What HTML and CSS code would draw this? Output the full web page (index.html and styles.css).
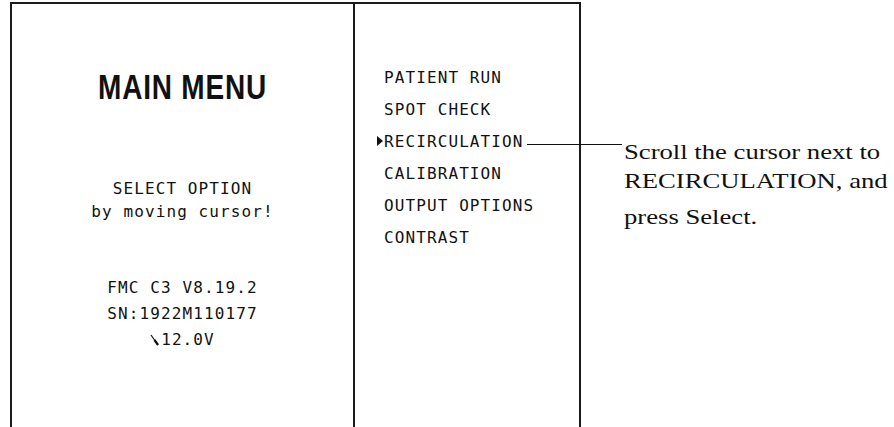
FILE: index.html
```html
<!DOCTYPE html>
<html lang="en">
<head>
  <meta charset="UTF-8">
  <meta name="viewport" content="width=device-width, initial-scale=1.0">
  <title>Main Menu</title>
  <link rel="stylesheet" href="styles.css">
</head>
<body>

  <div class="page">
    <div class="screen">
      <div class="panel-left">
        <h1 class="title">MAIN MENU</h1>
        <p class="lcd prompt">SELECT OPTION</p>
        <p class="lcd">by moving cursor!</p>
        <p class="lcd info first">FMC C3 V8.19.2</p>
        <p class="lcd info">SN:1922M110177</p>
        <p class="lcd info">
          <svg class="plug" width="10" height="12" viewBox="0 0 10 12">
            <path d="M1 1 L8 11" stroke="#111" stroke-width="1.2" fill="none"/>
            <path d="M4.5 6 L8 11" stroke="#111" stroke-width="2.2" fill="none"/>
          </svg>12.0V
        </p>
      </div>

      <div class="panel-right">
        <ul class="menu">
          <li class="lcd">PATIENT RUN</li>
          <li class="lcd">SPOT CHECK</li>
          <li class="lcd selected"><span>RECIRCULATION</span><span class="leader"></span></li>
          <li class="lcd">CALIBRATION</li>
          <li class="lcd">OUTPUT OPTIONS</li>
          <li class="lcd">CONTRAST</li>
        </ul>
      </div>
    </div>

    <div class="note">
      <p class="note-line">Scroll the cursor next to</p>
      <p class="note-line second">RECIRCULATION, and</p>
      <p class="note-line third">press Select.</p>
    </div>
  </div>

</body>
</html>
```

FILE: styles.css
```css
  body {
    margin: 0;
    background-color: #fff;
    color: #111;
    overflow: hidden;
    font-family: 'Liberation Sans', Arial, sans-serif;
  }

  .page {
    display: flex;
    align-items: flex-start;
    padding: 2px 0 0 10px;
  }

  .screen {
    display: flex;
    height: 440px;
    border-top: 2px solid #1b1b1b;
  }

  .panel-left {
    width: 341px;
    border-left: 2px solid #1b1b1b;
    text-align: center;
  }

  .panel-right {
    width: 224px;
    border-left: 2px solid #1b1b1b;
    border-right: 2px solid #1b1b1b;
  }

  .title {
    margin: 63px 0 0;
    font-size: 35px;
    line-height: 40px;
    font-weight: bold;
    letter-spacing: 1px;
    transform: scaleX(0.8);
  }

  .lcd {
    margin: 0;
    font-family: 'DejaVu Sans Mono', monospace;
    font-size: 16px;
    line-height: 23px;
    letter-spacing: 1.1px;
    white-space: nowrap;
  }

  .prompt {
    margin-top: 70px;
  }

  .info {
    line-height: 26px;
  }

  .info.first {
    margin-top: 52px;
  }

  .plug {
    vertical-align: -1px;
    margin-right: 1px;
  }

  .menu {
    list-style-type: none;
    margin: 0;
    padding: 58px 0 0 29px;
  }

  .menu li {
    line-height: 32px;
  }

  .selected {
    display: flex;
    position: relative;
  }

  .selected::before {
    content: '';
    position: absolute;
    left: -7px;
    top: 10px;
    border-left: 6px solid #111;
    border-top: 5px solid transparent;
    border-bottom: 5px solid transparent;
  }

  .leader {
    flex: none;
    width: 95px;
    height: 1px;
    margin: 18px 0 0 3px;
    background-color: #111;
  }

  .note {
    margin-left: 43px;
    padding-top: 138px;
    font-family: 'Liberation Serif', 'Times New Roman', serif;
    font-size: 21.5px;
    line-height: 24px;
    white-space: nowrap;
  }

  .note-line {
    margin: 0;
    transform: scaleX(1.24);
    transform-origin: left;
  }

  .note-line.second {
    margin-top: 5px;
  }

  .note-line.third {
    margin-top: 12px;
  }
```
